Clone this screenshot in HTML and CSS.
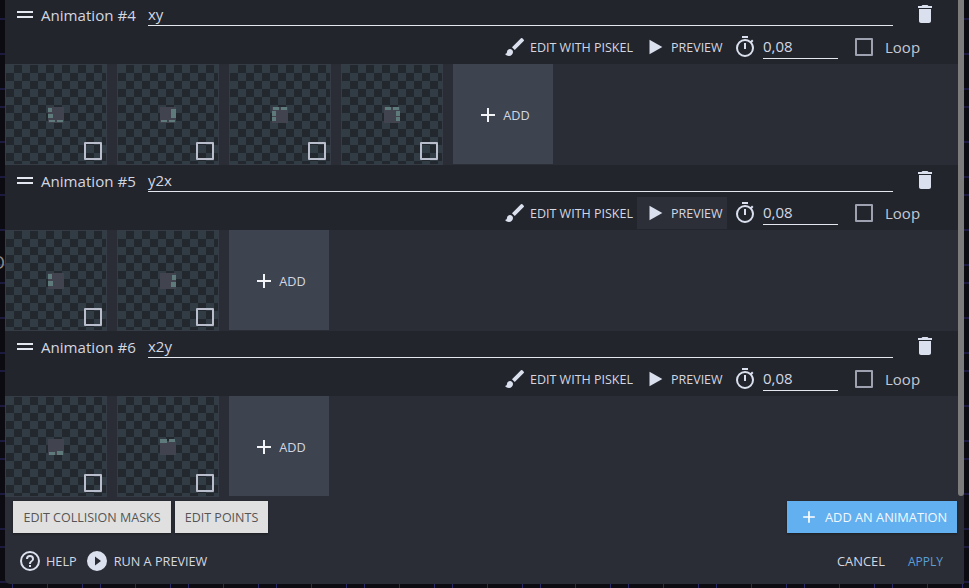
FILE: index.html
```html
<!DOCTYPE html>
<html lang="en">
<head>
<meta charset="utf-8">
<title>Animations</title>
<link rel="stylesheet" href="styles.css">
</head>
<body>
<svg class="defs" width="0" height="0" aria-hidden="true">
  <defs>
    <symbol id="i-brush" viewBox="0 0 24 24"><path d="M7 14c-1.66 0-3 1.34-3 3 0 1.31-1.16 2-2 2 .92 1.22 2.49 2 4 2 2.21 0 4-1.79 4-4 0-1.66-1.34-3-3-3zm13.71-9.37l-1.34-1.34a1 1 0 0 0-1.41 0L9 12.25 11.75 15l8.96-8.96a1 1 0 0 0 0-1.41z"/></symbol>
    <symbol id="i-play" viewBox="0 0 24 24"><path d="M6 4l14 8-14 8z"/></symbol>
    <symbol id="i-timer" viewBox="0 0 24 24"><path d="M15 1H9v2h6V1zm-4 13h2V8h-2v6zm8.03-6.61l1.42-1.42c-.43-.51-.9-.99-1.41-1.41l-1.42 1.42A8.96 8.96 0 0 0 12 4a9 9 0 1 0 9 9c0-2.12-.74-4.07-1.97-5.61zM12 20a7 7 0 1 1 0-14 7 7 0 0 1 0 14z"/></symbol>
    <symbol id="i-trash" viewBox="0 0 24 24"><path d="M6 19c0 1.1.9 2 2 2h8c1.100 0 2-.9 2-2V7H6v12zM19 4h-3.500l-1-1h-5l-1 1H5v2h14V4z"/></symbol>
    <symbol id="i-plus" viewBox="0 0 24 24"><path d="M19 13h-6v6h-2v-6H5v-2h6V5h2v6h6v2z"/></symbol>
    <symbol id="i-help" viewBox="0 0 24 24"><path d="M11 18h2v-2h-2v2zm1-16a10 10 0 1 0 0 20 10 10 0 0 0 0-20zm0 18a8 8 0 1 1 0-16 8 8 0 0 1 0 16zm0-14a4 4 0 0 0-4 4h2a2 2 0 1 1 4 0c0 2-3 1.750-3 5h2c0-2.250 3-2.500 3-5a4 4 0 0 0-4-4z"/></symbol>
    <symbol id="i-run" viewBox="0 0 24 24"><path d="M12 2a10 10 0 1 0 0 20 10 10 0 0 0 0-20zm-2 14.500v-9l6 4.500-6 4.500z"/></symbol>
  </defs>
</svg>

<span class="stray">O</span>
<main class="dialog">
  <div class="scrollbar"></div>
  <div class="list">

    <section class="anim">
      <div class="anim-head">
        <div class="title-row">
          <span class="handle"></span>
          <span class="anim-name">Animation #4</span>
          <span class="name-field">xy</span>
          <svg class="trash"><use href="#i-trash"/></svg>
        </div>
        <div class="tools-row">
          <span class="tool"><svg class="tool-icon"><use href="#i-brush"/></svg>Edit with Piskel</span>
          <span class="tool tool-preview"><svg class="tool-icon"><use href="#i-play"/></svg>Preview</span>
          <svg class="timer"><use href="#i-timer"/></svg>
          <span class="time-field">0,08</span>
          <span class="check check-loop"></span>
          <span class="loop">Loop</span>
        </div>
      </div>
      <div class="frames">
        <div class="thumb"><svg class="sprite" viewBox="0 0 16 16"><rect class="s-body" width="16" height="16"/><path class="s-edge" d="M0 1h4v4H0zM0 7h5v4H0zM1 13h6v2H1zM9 13h6v2H9z"/></svg><span class="check"></span></div>
        <div class="thumb"><svg class="sprite" viewBox="0 0 16 16"><rect class="s-body" width="16" height="16"/><path class="s-edge" d="M11 2h5v5h-5zM11 7h5v4h-5zM1 13h6v2H1zM9 13h6v2H9z"/></svg><span class="check"></span></div>
        <div class="thumb"><svg class="sprite" viewBox="0 0 16 16"><rect class="s-body" width="16" height="16"/><path class="s-edge" d="M1 0h6v3H1zM9 0h6v3H9zM0 4h4v5H0zM0 10h4v4H0z"/></svg><span class="check"></span></div>
        <div class="thumb"><svg class="sprite" viewBox="0 0 16 16"><rect class="s-body" width="16" height="16"/><path class="s-edge" d="M1 0h6v3H1zM9 0h6v3H9zM12 4h4v5h-4zM12 10h4v4h-4z"/></svg><span class="check"></span></div>
        <div class="add"><svg class="add-icon"><use href="#i-plus"/></svg>Add</div>
      </div>
    </section>

    <section class="anim">
      <div class="anim-head">
        <div class="title-row">
          <span class="handle"></span>
          <span class="anim-name">Animation #5</span>
          <span class="name-field">y2x</span>
          <svg class="trash"><use href="#i-trash"/></svg>
        </div>
        <div class="tools-row">
          <span class="tool"><svg class="tool-icon"><use href="#i-brush"/></svg>Edit with Piskel</span>
          <span class="tool tool-preview is-hover"><svg class="tool-icon"><use href="#i-play"/></svg>Preview</span>
          <svg class="timer"><use href="#i-timer"/></svg>
          <span class="time-field">0,08</span>
          <span class="check check-loop"></span>
          <span class="loop">Loop</span>
        </div>
      </div>
      <div class="frames">
        <div class="thumb"><svg class="sprite" viewBox="0 0 16 16"><rect class="s-body" width="16" height="16"/><path class="s-edge" d="M0 1h4v5H0zM0 8h5v5H0z"/></svg><span class="check"></span></div>
        <div class="thumb"><svg class="sprite" viewBox="0 0 16 16"><rect class="s-body" width="16" height="16"/><path class="s-edge" d="M12 2h4v5h-4zM11 9h5v5h-5z"/></svg><span class="check"></span></div>
        <div class="add"><svg class="add-icon"><use href="#i-plus"/></svg>Add</div>
      </div>
    </section>

    <section class="anim">
      <div class="anim-head">
        <div class="title-row">
          <span class="handle"></span>
          <span class="anim-name">Animation #6</span>
          <span class="name-field">x2y</span>
          <svg class="trash"><use href="#i-trash"/></svg>
        </div>
        <div class="tools-row">
          <span class="tool"><svg class="tool-icon"><use href="#i-brush"/></svg>Edit with Piskel</span>
          <span class="tool tool-preview"><svg class="tool-icon"><use href="#i-play"/></svg>Preview</span>
          <svg class="timer"><use href="#i-timer"/></svg>
          <span class="time-field">0,08</span>
          <span class="check check-loop"></span>
          <span class="loop">Loop</span>
        </div>
      </div>
      <div class="frames">
        <div class="thumb"><svg class="sprite" viewBox="0 0 16 16"><rect class="s-body" width="16" height="16"/><path class="s-edge" d="M1 13h6v3H1zM9 12h6v4H9z"/></svg><span class="check"></span></div>
        <div class="thumb"><svg class="sprite" viewBox="0 0 16 16"><rect class="s-body" y="2" width="16" height="14"/><path class="s-edge" d="M0 0h7v4H0zM9 0h6v3H9z"/></svg><span class="check"></span></div>
        <div class="add"><svg class="add-icon"><use href="#i-plus"/></svg>Add</div>
      </div>
    </section>
  </div>

  <div class="actions">
    <button class="btn-light btn-masks" type="button">Edit collision masks</button>
    <button class="btn-light btn-points" type="button">Edit points</button>
    <button class="btn-primary" type="button"><svg class="primary-icon"><use href="#i-plus"/></svg>Add an animation</button>
  </div>

  <footer class="footer">
    <span class="foot-link foot-help"><svg class="foot-icon"><use href="#i-help"/></svg>Help</span>
    <span class="foot-link foot-run"><svg class="foot-icon"><use href="#i-run"/></svg>Run a preview</span>
    <span class="foot-spacer"></span>
    <span class="foot-link foot-cancel">Cancel</span>
    <span class="foot-link foot-apply">Apply</span>
  </footer>
</main>
</body>
</html>
```

FILE: styles.css
```css
* { box-sizing: border-box; }

html, body { height: 100%; }

body {
  margin: 0;
  width: 969px;
  height: 588px;
  overflow: hidden;
  position: relative;
  padding: 0 5px 4px 5px;
  font-family: "Open Sans", "Noto Sans", sans-serif;
  color: #d3d7e2;
  background-color: #0b0b11;
  background-image:
    repeating-linear-gradient(to bottom, transparent 0, transparent 17px, #2c2a6b 17px, #2c2a6b 17.6px),
    repeating-linear-gradient(to right, transparent 0, transparent 12px, #2c2a6b 12px, #2c2a6b 12.6px, transparent 12.6px, transparent 17.6px);
  background-position: 0 1.5px, 0 0;
}

.defs { position: absolute; }

.stray {
  position: absolute;
  left: -9px;
  top: 250px;
  font-size: 18px;
  color: #8c8c8c;
}

.dialog {
  position: relative;
  height: 100%;
  display: flex;
  flex-direction: column;
  background: #2a2d35;
  border-radius: 0 0 0 5px;
  overflow: hidden;
}

.scrollbar {
  position: absolute;
  top: 0;
  right: 0;
  width: 6px;
  height: 496px;
  background: #7c7c7c;
  border-radius: 0 0 3px 3px;
  z-index: 2;
}

.list {
  height: 497px;
  margin-top: -1px;
  flex: none;
  padding-right: 6px;
}

.anim { height: 166px; }

.anim-head {
  height: 65px;
  background: #22252c;
}

.title-row {
  height: 32px;
  display: flex;
  align-items: center;
  padding: 0 0 1px 12px;
}

.handle {
  width: 16px;
  height: 7px;
  border-top: 2px solid #e4e7ef;
  border-bottom: 2px solid #e4e7ef;
  margin-right: 8px;
}

.anim-name {
  font-size: 15.1px;
  width: 107px;
  color: #d3d7e2;
}

.name-field {
  width: 745px;
  height: 23px;
  font-size: 15px;
  line-height: 22px;
  border-bottom: 1px solid #e4e7ef;
  color: #d3d7e2;
}

.trash {
  width: 24px;
  height: 24px;
  margin-left: 20px;
  margin-top: -2px;
  fill: #dbe0ee;
}

.tools-row {
  height: 33px;
  display: flex;
  align-items: center;
  justify-content: flex-end;
  padding-right: 36px;
  padding-bottom: 1px;
}

.tool {
  height: 32px;
  display: flex;
  align-items: center;
  font-size: 12.5px;
  text-transform: uppercase;
  color: #d3d7e2;
  padding: 0 4px 0 0;
}

.tool-preview { width: 90px; padding-left: 7px; }

.is-hover { background: #2c2f38; }

.tool-icon {
  width: 24px;
  height: 24px;
  fill: #dbe0ee;
  margin-right: 3px;
}

.tool-preview .tool-icon { width: 22px; height: 22px; margin-right: 5px; }

.timer {
  width: 24px;
  height: 24px;
  margin-left: 6px;
  fill: #dbe0ee;
}

.time-field {
  width: 75px;
  height: 23px;
  margin-left: 6px;
  font-size: 15px;
  line-height: 20px;
  border-bottom: 1px solid #e4e7ef;
  color: #d3d7e2;
}

.check {
  display: block;
  width: 18px;
  height: 18px;
  border: 2px solid #b9bdcc;
  border-radius: 1px;
}

.check-loop {
  margin-left: 17px;
  border-color: #9ea2b0;
}

.loop {
  width: 37px;
  margin-left: 12px;
  font-size: 15px;
  color: #c5c9d4;
}

.frames {
  height: 101px;
  display: flex;
  gap: 10px;
  background: #2a2d35;
}

.thumb {
  position: relative;
  width: 102px;
  height: 101px;
  display: flex;
  align-items: center;
  justify-content: center;
  border: 1px solid #363c45;
  background-image: conic-gradient(#22282d 25%, #323c44 0 50%, #22282d 0 75%, #323c44 0);
  background-size: 16px 16px;
}

.thumb .check {
  position: absolute;
  right: 4px;
  bottom: 4px;
}

.sprite { width: 16px; height: 16px; display: block; }
.s-body { fill: #41444f; }
.s-edge { fill: #5f7a7a; }

.add {
  width: 100px;
  height: 100px;
  display: flex;
  align-items: center;
  justify-content: center;
  padding-top: 2px;
  background: #3e4350;
  font-size: 12.7px;
  text-transform: uppercase;
  color: #d3d7e2;
}

.add-icon {
  width: 24px;
  height: 24px;
  margin-right: 3px;
  fill: #f2f4f8;
}

.actions {
  flex: none;
  display: flex;
  gap: 4px;
  margin-top: 5px;
  padding: 0 7px 0 8px;
}

.btn-light, .btn-primary {
  height: 32px;
  border: 0;
  border-radius: 0;
  font-family: inherit;
  font-size: 12.5px;
  text-transform: uppercase;
  box-shadow: 0 1px 2px rgba(0, 0, 0, .35);
}

.btn-light {
  padding: 0;
  background: #e0e0e0;
  color: #555;
}

.btn-masks { width: 158px; }
.btn-points { width: 93px; }

.btn-primary {
  margin-left: auto;
  width: 170px;
  display: flex;
  align-items: center;
  padding: 0 8px 0 12px;
  font-size: 12.8px;
  background: #62b0ef;
  color: #f2f8fd;
  white-space: nowrap;
}

.primary-icon {
  width: 20px;
  height: 20px;
  margin-right: 6px;
  fill: #fff;
}

.footer {
  flex: none;
  display: flex;
  align-items: center;
  height: 44px;
  margin-top: 6px;
  padding: 0 21px 0 13px;
  font-size: 12.7px;
  text-transform: uppercase;
}

.foot-link {
  display: flex;
  align-items: center;
  color: #d3d7e2;
}

.foot-help .foot-icon { margin-right: 4px; }

.foot-run { margin-left: 8px; }

.foot-icon {
  width: 24px;
  height: 24px;
  fill: #dbe0ee;
}

.foot-run .foot-icon { margin-right: 5px; }

.foot-spacer { flex: 1; }

.foot-cancel { font-size: 12.9px; }

.foot-apply {
  margin-left: 23px;
  font-size: 12px;
  color: #5a9fd8;
}
```
